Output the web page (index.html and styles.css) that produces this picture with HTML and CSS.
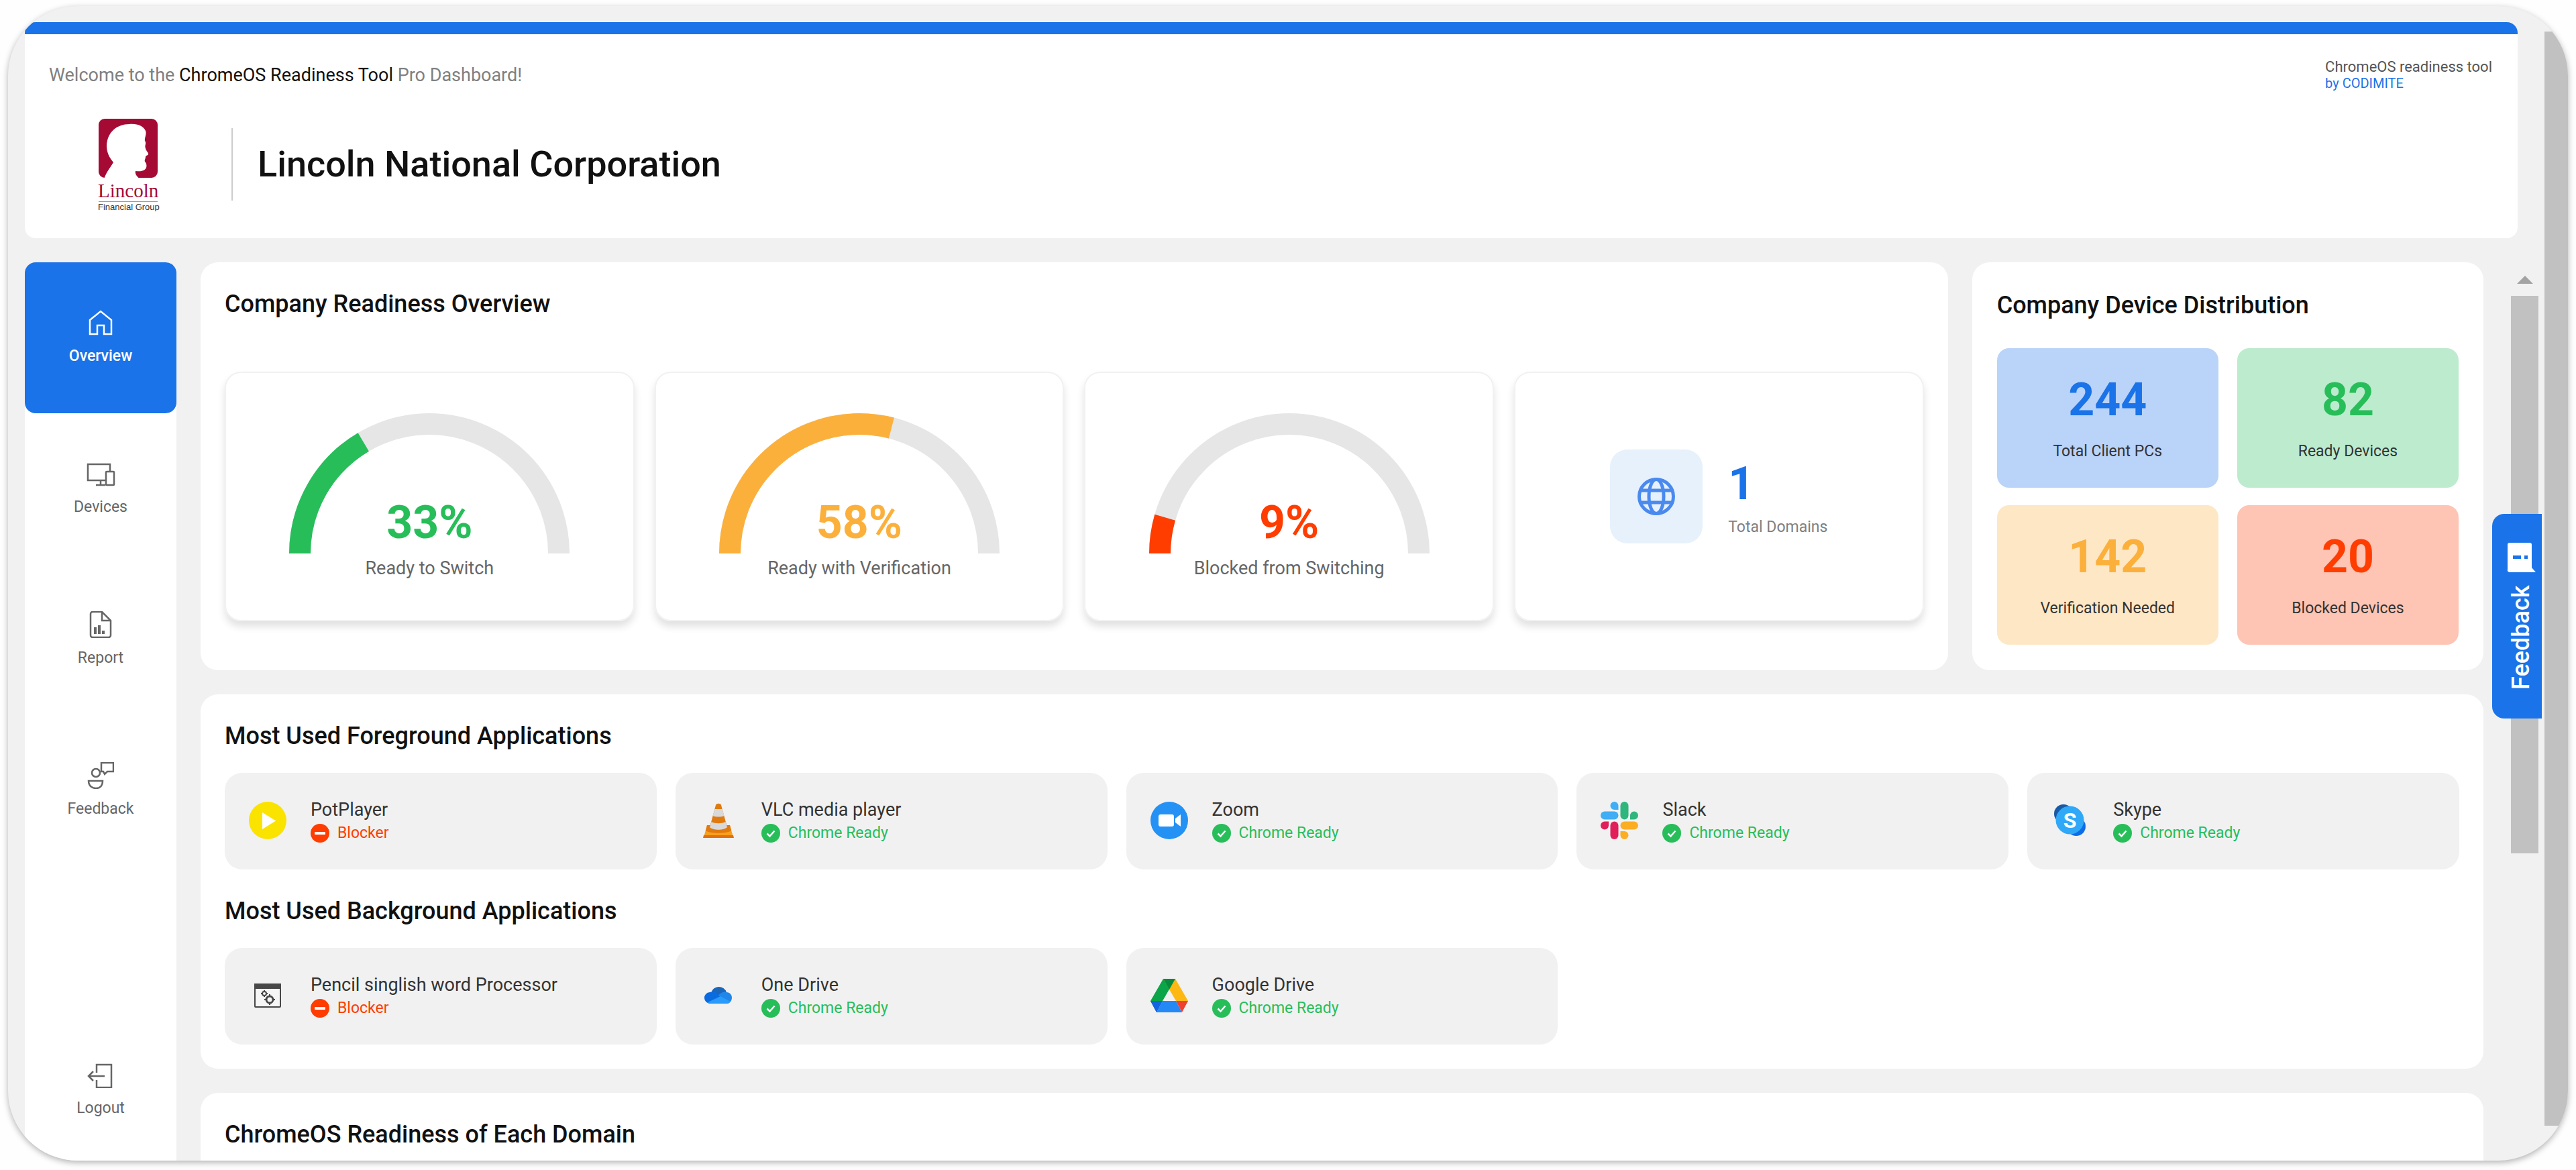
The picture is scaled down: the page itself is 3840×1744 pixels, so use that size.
FILE: index.html
```
<!DOCTYPE html>
<html lang="en">

<head>
	<meta charset="utf-8">
	<meta name="viewport" content="width=device-width, initial-scale=1.0">
	<title>ChromeOS Readiness Tool</title>
	<link rel="stylesheet" href="styles.css">
</head>

<body>
	<!-- shared status icons -->
	<svg class="sprite" aria-hidden="true">
		<symbol id="ready" viewBox="0 0 28 28">
			<circle cx="14" cy="14" r="14" fill="#27be5a" />
			<path d="M8.500 14.500l4 4 7-8" fill="none" stroke="#fff" stroke-width="2.500" />
		</symbol>
		<symbol id="blocker" viewBox="0 0 28 28">
			<circle cx="14" cy="14" r="14" fill="#ff3d00" />
			<rect x="6" y="12" width="16" height="4" rx="1" fill="#fff" />
		</symbol>
	</svg>

	<div class="window">
		<div class="page">
			<header class="header">
				<div class="header_top">
					<p class="welcome">Welcome to the <b>ChromeOS Readiness Tool</b> Pro Dashboard!</p>
					<div class="credit">
						<p>ChromeOS readiness tool</p>
						<a href="#">by CODIMITE</a>
					</div>
				</div>
				<div class="brand">
					<svg class="brand_logo" viewBox="0 0 100 140" role="img" aria-label="Lincoln Financial Group">
						<rect x="4" y="2" width="88" height="88" rx="9" fill="#a50a35" />
						<path d="M12 92C15 82 22 74 26 67C20 60 16 52 16 42C17 22 31 10 50 10C62 9 71 13 74 20C76 25 72 31 73 35C76 39 72 42 74 46C74 49 79 53 78 55C78 57 74 56 74 59C74 62 72 63 73 66C77 70 76 77 71 79C66 81 63 80 59 80C58 85 61 88 66 92Z" fill="#fff" />
						<text x="3" y="119" class="brand_name">Lincoln</text>
						<path d="M4 125.500H92" stroke="#999" />
						<text x="3" y="138" class="brand_sub">Financial Group</text>
					</svg>
					<h1>Lincoln National Corporation</h1>
				</div>
			</header>

			<div class="body">
				<nav class="sidebar">
					<a href="#" class="nav_item selected">
						<svg viewBox="0 0 40 40"><path d="M4 16L20 3l16 13v21H25V24H15v13H4z" /></svg>
						Overview
					</a>
					<a href="#" class="nav_item">
						<svg viewBox="0 0 44 40"><path d="M30 30H3V6h33v11M15 37h14M22 30v7" /><rect x="30" y="17" width="12" height="20" rx="1" /></svg>
						Devices
					</a>
					<a href="#" class="nav_item">
						<svg viewBox="0 0 40 40"><path d="M22 1H8a3 3 0 0 0-3 3v32a3 3 0 0 0 3 3h24a3 3 0 0 0 3-3V14L22 1v13h13" /><path d="M12 24v10M18 21v13M24 29v5" stroke-width="4" /></svg>
						Report
					</a>
					<a href="#" class="nav_item">
						<svg viewBox="0 0 40 40"><circle cx="13" cy="16" r="6" /><path d="M2 28h21c0 8-5 11-10 11S2 36 2 28zM21 1h18v13h-9l-4 4-2-4h-3z" /></svg>
						Feedback
					</a>
					<a href="#" class="nav_item logout">
						<svg viewBox="0 0 40 40"><path d="M14 17V5h22v34H14V28M26 22H3M9 15l-7 7 7 7" /></svg>
						Logout
					</a>
				</nav>

				<main class="content">
					<section class="panel overview">
						<h2>Company Readiness Overview</h2>
						<div class="cards">
							<article class="card">
								<div class="gauge green">
									<svg viewBox="0 0 418 209">
										<path class="track" d="M16 209a193 193 0 0 1 386 0" />
										<path class="value" pathLength="100" stroke-dasharray="33 100" d="M16 209a193 193 0 0 1 386 0" />
									</svg>
									<p class="number">33%</p>
								</div>
								<p class="card_label">Ready to Switch</p>
							</article>
							<article class="card">
								<div class="gauge orange">
									<svg viewBox="0 0 418 209">
										<path class="track" d="M16 209a193 193 0 0 1 386 0" />
										<path class="value" pathLength="100" stroke-dasharray="58 100" d="M16 209a193 193 0 0 1 386 0" />
									</svg>
									<p class="number">58%</p>
								</div>
								<p class="card_label">Ready with Verification</p>
							</article>
							<article class="card">
								<div class="gauge red">
									<svg viewBox="0 0 418 209">
										<path class="track" d="M16 209a193 193 0 0 1 386 0" />
										<path class="value" pathLength="100" stroke-dasharray="9 100" d="M16 209a193 193 0 0 1 386 0" />
									</svg>
									<p class="number">9%</p>
								</div>
								<p class="card_label">Blocked from Switching</p>
							</article>
							<article class="card domains">
								<div class="domains_icon">
									<svg viewBox="0 0 56 56"><circle cx="28" cy="28" r="25.500" /><ellipse cx="28" cy="28" rx="11" ry="25.500" /><path d="M4 19h48M4 37h48" /></svg>
								</div>
								<div>
									<p class="number blue">1</p>
									<p class="domains_label">Total Domains</p>
								</div>
							</article>
						</div>
					</section>

					<section class="panel distribution">
						<h2>Company Device Distribution</h2>
						<div class="tiles">
							<div class="tile tile_blue">
								<p class="number blue">244</p>
								<p class="tile_label">Total Client PCs</p>
							</div>
							<div class="tile tile_green">
								<p class="number green">82</p>
								<p class="tile_label">Ready Devices</p>
							</div>
							<div class="tile tile_orange">
								<p class="number orange">142</p>
								<p class="tile_label">Verification Needed</p>
							</div>
							<div class="tile tile_red">
								<p class="number red">20</p>
								<p class="tile_label">Blocked Devices</p>
							</div>
						</div>
					</section>

					<section class="panel wide">
						<h2>Most Used Foreground Applications</h2>
						<div class="apps">
							<article class="app">
								<svg class="app_icon" viewBox="0 0 56 56"><circle cx="28" cy="28" r="28" fill="#fbe300" /><path d="M20 16v25l20-12.500z" fill="#fff" /></svg>
								<div>
									<h3>PotPlayer</h3>
									<p class="status red"><svg><use href="#blocker" /></svg>Blocker</p>
								</div>
							</article>
							<article class="app">
								<svg class="app_icon" viewBox="0 0 56 56">
									<path d="M11 35h34l5 18H6z" fill="#f9a01b" />
									<path d="M6 50h44l1 4H5z" fill="#e56f0c" />
									<path d="M11 35h34l2 8c-6 5-32 5-38 0z" fill="#e07a10" />
									<path d="M24 5c1-3 7-3 8 0l9 33c-5 5-21 5-26 0z" fill="#e07a10" />
									<path d="M22.500 11h11l3 10c-4 2-13 2-17 0zM17.500 30c5 3 16 3 21 0l2.500 8c-5 5-21 5-26 0z" fill="#d9d9d9" />
								</svg>
								<div>
									<h3>VLC media player</h3>
									<p class="status green"><svg><use href="#ready" /></svg>Chrome Ready</p>
								</div>
							</article>
							<article class="app">
								<svg class="app_icon" viewBox="0 0 56 56"><circle cx="28" cy="28" r="28" fill="#2492f5" /><rect x="12" y="19" width="23" height="18" rx="3" fill="#fff" /><path d="M37 25l8-6v18l-8-6z" fill="#fff" /></svg>
								<div>
									<h3>Zoom</h3>
									<p class="status green"><svg><use href="#ready" /></svg>Chrome Ready</p>
								</div>
							</article>
							<article class="app">
								<svg class="app_icon" viewBox="0 0 56 56">
									<g fill="#40adf5"><path d="M20.500 0a6 6 0 0 1 6 6v6h-6a6 6 0 0 1 0-12z" /><rect y="14.500" width="26.500" height="12" rx="6" /></g>
									<g fill="#2eb67d"><rect x="29.500" width="12" height="26.500" rx="6" /><path d="M56 20.500a6 6 0 0 1-6 6h-6v-6a6 6 0 0 1 12 0z" /></g>
									<g fill="#e01e5a"><rect x="14.500" y="29.500" width="12" height="26.500" rx="6" /><path d="M0 35.500a6 6 0 0 1 6-6h6v6a6 6 0 0 1-12 0z" /></g>
									<g fill="#fbae22"><rect x="29.500" y="29.500" width="26.500" height="12" rx="6" /><path d="M35.500 56a6 6 0 0 1-6-6v-6h6a6 6 0 0 1 0 12z" /></g>
								</svg>
								<div>
									<h3>Slack</h3>
									<p class="status green"><svg><use href="#ready" /></svg>Chrome Ready</p>
								</div>
							</article>
							<article class="app">
								<svg class="app_icon" viewBox="0 0 56 56">
									<circle cx="18" cy="18" r="14" fill="#195aa5" />
									<circle cx="37" cy="37" r="14" fill="#0f6ce8" />
									<circle cx="27.500" cy="27.500" r="21" fill="#30a8f8" />
									<text x="27.500" y="39" class="skype_s">S</text>
								</svg>
								<div>
									<h3>Skype</h3>
									<p class="status green"><svg><use href="#ready" /></svg>Chrome Ready</p>
								</div>
							</article>
						</div>

						<h2>Most Used Background Applications</h2>
						<div class="apps">
							<article class="app">
								<svg class="app_icon" viewBox="0 0 56 56" fill="none" stroke="#484848">
									<rect x="9" y="11" width="38" height="34" rx="1" fill="#f6f6f6" stroke-width="2" />
									<path d="M8 10h40v8H8z" fill="#484848" stroke="none" />
									<circle cx="23" cy="25" r="3" stroke-width="2" />
									<path d="M23 20v2M23 28v2M18 25h2M26 25h2" stroke-width="2" />
									<circle cx="31" cy="34" r="5" stroke-width="3" />
									<path d="M31 26v3M31 39v3M23 34h3M36 34h3" stroke-width="2" />
								</svg>
								<div>
									<h3>Pencil singlish word Processor</h3>
									<p class="status red"><svg><use href="#blocker" /></svg>Blocker</p>
								</div>
							</article>
							<article class="app">
								<svg class="app_icon" viewBox="0 0 56 56">
									<path d="M17 24a12 12 0 0 1 23-1l-9 11z" fill="#1a66b8" />
									<path d="M16 40a8.500 8.500 0 0 1-1-17c5-2 10 0 13 3l9 8-18 6z" fill="#0a6be0" />
									<path d="M28 28c4-6 10-6 12-5 5 0 8 4 8 8 0 3-1 5-3 7z" fill="#2186ea" />
									<path d="M12 38l19-9 15 8c-1 2-3 3-5 3H16c-2 0-3-1-4-2z" fill="#299bfa" />
								</svg>
								<div>
									<h3>One Drive</h3>
									<p class="status green"><svg><use href="#ready" /></svg>Chrome Ready</p>
								</div>
							</article>
							<article class="app">
								<svg class="app_icon" viewBox="0 0 56 56">
									<path d="M19 3h18L18 36 9 53 0 36z" fill="#0aa548" />
									<path d="M19 3h18l19 33H38z" fill="#fdb813" />
									<path d="M19 3h18l-9 16z" fill="#088a3c" />
									<path d="M0 36h18L9 53z" fill="#1265e0" />
									<path d="M18 36h20l9 17H9z" fill="#2489f5" />
									<path d="M38 36h18l-9 17z" fill="#ee4130" />
								</svg>
								<div>
									<h3>Google Drive</h3>
									<p class="status green"><svg><use href="#ready" /></svg>Chrome Ready</p>
								</div>
							</article>
						</div>
					</section>

					<section class="panel wide">
						<h2>ChromeOS Readiness of Each Domain</h2>
					</section>
				</main>

				<div class="scrollbar inner">
					<span class="arrow"></span>
					<span class="thumb"></span>
				</div>
			</div>

			<button class="feedback_tab">
				Feedback
				<svg viewBox="0 0 44 44"><path transform="rotate(90 22 22)" fill="#fff" fill-rule="evenodd" d="M4 2h37a3 3 0 0 1 3 3v30a3 3 0 0 1-3 3H7l-7 6V5a3 3 0 0 1 4-3zM20 10h5v12h-5zM20 27h5v5h-5z" /></svg>
			</button>
		</div>

		<div class="scrollbar outer">
			<span class="thumb"></span>
		</div>
	</div>
</body>

</html>
```
FILE: styles.css
```
* {
	margin: 0;
	box-sizing: border-box;
}

body {
	font-family: Roboto, "Liberation Sans", sans-serif;
	background-color: #fefefe;
	color: #111;
}

a {
	color: #1a73e8;
	text-decoration: none;
}

h2 {
	font-size: 36px;
	line-height: 44px;
	font-weight: 500;
}

.sprite {
	position: absolute;
	width: 0;
	height: 0;
}

.window {
	display: flex;
	height: calc(100vh - 23px);
	margin: 9px 12px 14px;
	overflow: hidden;
	border-radius: 104px;
	background-color: #f1f1f1;
	box-shadow: 0 3px 10px rgba(0, 0, 0, 0.3);
}

.page {
	position: relative;
	display: flex;
	flex-direction: column;
	flex: 1;
	min-width: 0;
	padding: 24px 0 0 25px;
}

/* header */
.header {
	margin-right: 40px;
	padding: 37px 38px 40px 36px;
	border-top: 18px solid #1a73e8;
	border-radius: 16px;
	background-color: #fff;
}

.header_top {
	display: flex;
	justify-content: space-between;
	margin-bottom: 39px;
}

.welcome {
	padding-top: 8px;
	font-size: 27px;
	line-height: 32px;
	color: #808080;
}

.welcome b {
	font-weight: 400;
	color: #111;
}

.credit {
	font-size: 22px;
	line-height: 24px;
	color: #555;
}

.credit a {
	display: block;
	font-size: 20px;
}

.brand {
	display: flex;
	align-items: center;
}

.brand_logo {
	width: 100px;
	height: 140px;
	margin: 0 102px 0 70px;
}

.brand_name {
	font-family: "Liberation Serif", serif;
	font-size: 29px;
	fill: #a50a35;
}

.brand_sub {
	font-family: "Liberation Sans", sans-serif;
	font-size: 13px;
	fill: #333;
}

.brand h1 {
	display: flex;
	align-items: center;
	height: 108px;
	padding-left: 37px;
	border-left: 2px solid #ccc;
	font-size: 54px;
	line-height: 64px;
	font-weight: 500;
}

/* sidebar */
.body {
	display: flex;
	flex: 1;
	min-height: 0;
	margin-top: 36px;
}

.sidebar {
	display: flex;
	flex-direction: column;
	width: 226px;
	margin-right: 36px;
	border-radius: 16px 16px 0 0;
	background-color: #fff;
}

.nav_item {
	display: flex;
	flex-direction: column;
	align-items: center;
	justify-content: center;
	gap: 16px;
	height: 225px;
	padding-bottom: 2px;
	font-size: 23px;
	line-height: 28px;
	color: #666;
}

.nav_item svg {
	height: 40px;
	fill: none;
	stroke: currentColor;
	stroke-width: 2.5;
}

.nav_item.selected {
	border-radius: 16px;
	background-color: #1a73e8;
	font-weight: 500;
	color: #fff;
}

.nav_item.logout {
	height: 210px;
	margin-top: auto;
}

/* content */
.content {
	display: grid;
	grid-template-columns: minmax(0, 41fr) minmax(0, 12fr);
	gap: 36px;
	align-content: start;
	flex: 1;
	min-width: 0;
	overflow: hidden;
}

.panel {
	padding: 40px 36px 36px;
	border-radius: 26px;
	background-color: #fff;
}

.wide {
	grid-column: 1 / -1;
}

.wide:last-child {
	height: 200px;
}

.overview {
	display: flex;
	flex-direction: column;
}

.cards {
	display: grid;
	grid-template-columns: repeat(4, 1fr);
	gap: 30px;
	align-items: center;
	flex: 1;
	margin-top: 42px;
}

.card {
	height: 372px;
	padding-top: 60px;
	border: 2px solid #f1f1f1;
	border-radius: 24px;
	text-align: center;
	box-shadow: 0 8px 12px rgba(0, 0, 0, 0.12);
}

.gauge {
	position: relative;
	width: 418px;
	margin: 0 auto;
}

.gauge svg {
	display: block;
}

.gauge path {
	fill: none;
	stroke: currentColor;
	stroke-width: 32;
}

.gauge .track {
	stroke: #e6e6e6;
}

.gauge .number {
	position: absolute;
	left: 0;
	right: 0;
	bottom: 6px;
}

.number {
	font-size: 68px;
	line-height: 80px;
	font-weight: 700;
}

.card_label {
	margin-top: 6px;
	font-size: 27px;
	line-height: 32px;
	color: #666;
}

.domains {
	display: flex;
	align-items: center;
	justify-content: center;
	gap: 38px;
	padding: 0;
	text-align: left;
}

.domains_icon {
	display: flex;
	align-items: center;
	justify-content: center;
	width: 138px;
	height: 140px;
	border-radius: 26px;
	background-color: #e7f1fc;
}

.domains_icon svg {
	width: 56px;
	fill: none;
	stroke: #4a8aee;
	stroke-width: 5;
}

.domains_label {
	margin-top: 11px;
	font-size: 23px;
	line-height: 28px;
	color: #808080;
}

.blue {
	color: #1a73e8;
}

.green {
	color: #27be5a;
}

.orange {
	color: #fcb03c;
}

.red {
	color: #ff3d00;
}

/* device distribution */
.distribution {
	padding: 42px 37px 38px;
}

.tiles {
	display: grid;
	grid-template-columns: 1fr 1fr;
	gap: 26px 28px;
	margin-top: 42px;
}

.tile {
	height: 208px;
	padding-top: 37px;
	border-radius: 18px;
	text-align: center;
}

.tile_blue {
	background-color: #bad3f8;
}

.tile_green {
	background-color: #bdebce;
}

.tile_orange {
	background-color: #fee7c5;
}

.tile_red {
	background-color: #fec4b4;
}

.tile_label {
	margin-top: 23px;
	font-size: 23px;
	line-height: 28px;
	color: #333;
}

/* applications */
.apps {
	display: grid;
	grid-template-columns: repeat(5, 1fr);
	gap: 28px;
	margin-top: 33px;
}

.apps + h2 {
	margin-top: 40px;
}

.app {
	display: flex;
	align-items: center;
	gap: 36px;
	height: 144px;
	padding: 0 36px 2px;
	border-radius: 26px;
	background-color: #f1f1f1;
}

.app_icon {
	width: 56px;
	height: 56px;
}

.app h3 {
	margin-bottom: 5px;
	font-size: 27px;
	line-height: 32px;
	font-weight: 400;
	color: #333;
}

.status {
	display: flex;
	align-items: center;
	gap: 12px;
	font-size: 23px;
	line-height: 28px;
}

.status svg {
	width: 28px;
	height: 28px;
}

.skype_s {
	font-size: 32px;
	font-weight: 700;
	text-anchor: middle;
	fill: #fff;
}

/* scrollbars */
.scrollbar {
	display: flex;
	flex-direction: column;
	align-items: center;
}

.thumb {
	width: 100%;
	background-color: #c1c1c1;
}

.inner {
	width: 41px;
	margin: 0 9px 0 41px;
	padding-top: 20px;
}

.inner .thumb {
	height: 63%;
	margin-top: 18px;
}

.arrow {
	border: 12px solid transparent;
	border-top: 0;
	border-bottom-color: #a3a3a3;
}

.outer {
	width: 35px;
	padding: 38px 0 52px;
}

.outer .thumb {
	flex: 1;
}

.feedback_tab {
	position: absolute;
	top: 44%;
	right: 4px;
	display: flex;
	align-items: center;
	justify-content: center;
	gap: 20px;
	width: 74px;
	height: 305px;
	padding: 0 12px 0 0;
	border: 0;
	border-radius: 0 18px 18px 0;
	background-color: #1a73e8;
	font: 500 36px Roboto, sans-serif;
	color: #fff;
	writing-mode: vertical-rl;
	transform: rotate(180deg);
}

.feedback_tab svg {
	width: 44px;
	height: 44px;
}
```
